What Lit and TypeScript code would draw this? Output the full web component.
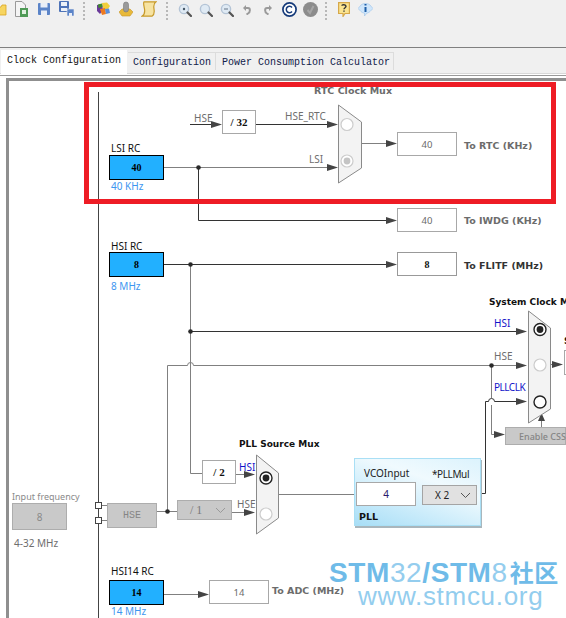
import { LitElement, html, css, svg } from "lit";
import { customElement } from "lit/decorators.js";

const ORIGIN_Y = 77;

type Box = { x: number; y: number; w: number; h: number; t: string; c: string };
type Label = { x: number; y: number; t: string; c: string };

const boxes: Box[] = [
  { x: 222, y: 109, w: 34, h: 24, t: "/ 32", c: "div" },
  { x: 109, y: 154, w: 55, h: 25, t: "40", c: "rc" },
  { x: 397, y: 131, w: 60, h: 24, t: "40", c: "out dim" },
  { x: 397, y: 207, w: 60, h: 24, t: "40", c: "out dim" },
  { x: 109, y: 251, w: 55, h: 25, t: "8", c: "rc" },
  { x: 397, y: 251, w: 60, h: 24, t: "8", c: "out strong" },
  { x: 564, y: 349, w: 40, h: 25, t: "", c: "out" },
  { x: 202, y: 459, w: 34, h: 24, t: "/ 2", c: "div" },
  { x: 12, y: 502, w: 55, h: 27, t: "8", c: "off" },
  { x: 107, y: 502, w: 50, h: 25, t: "HSE", c: "off hse" },
  { x: 505, y: 426, w: 61, h: 18, t: "", c: "off" },
  { x: 109, y: 579, w: 55, h: 25, t: "14", c: "rc" },
  { x: 209, y: 579, w: 60, h: 24, t: "14", c: "out dim" },
];

const labels: Label[] = [
  { x: 314, y: 90, t: "RTC Clock Mux", c: "title grey" },
  { x: 194, y: 117, t: "HSE", c: "wire" },
  { x: 285, y: 115, t: "HSE_RTC", c: "wire" },
  { x: 309, y: 158, t: "LSI", c: "wire" },
  { x: 111, y: 147, t: "LSI RC", c: "name" },
  { x: 111, y: 185, t: "40 KHz", c: "freq" },
  { x: 464, y: 145, t: "To RTC (KHz)", c: "title grey" },
  { x: 464, y: 220, t: "To IWDG (KHz)", c: "title grey" },
  { x: 111, y: 245, t: "HSI RC", c: "name" },
  { x: 111, y: 285, t: "8 MHz", c: "freq" },
  { x: 464, y: 265, t: "To FLITF (MHz)", c: "title dark" },
  { x: 489, y: 301, t: "System Clock Mux", c: "title black" },
  { x: 564, y: 340, t: "SYSCLK", c: "title black" },
  { x: 494, y: 322, t: "HSI", c: "sel" },
  { x: 494, y: 355, t: "HSE", c: "wire" },
  { x: 494, y: 386, t: "PLLCLK", c: "sel narrow" },
  { x: 519, y: 436, t: "Enable CSS", c: "css" },
  { x: 239, y: 443, t: "PLL Source Mux", c: "title black" },
  { x: 239, y: 466, t: "HSI", c: "sel" },
  { x: 237, y: 503, t: "HSE", c: "wire" },
  { x: 12, y: 496, t: "Input frequency", c: "wire small" },
  { x: 14, y: 542, t: "4-32 MHz", c: "wire" },
  { x: 111, y: 570, t: "HSI14 RC", c: "name" },
  { x: 111, y: 610, t: "14 MHz", c: "freq" },
  { x: 272, y: 590, t: "To ADC (MHz)", c: "title grey" },
];

const DARK = "#333";
const GREY = "#808080";

const wires: [string, string][] = [
  ["M190 123.5H214", DARK],
  ["M256 123.5H330", DARK],
  ["M164 166.5H330", GREY],
  ["M198.5 166.5V219.5H390", DARK],
  ["M362 142.5H390", GREY],
  ["M164 263.5H390", DARK],
  ["M190.5 263.5V472.5H202", GREY],
  ["M190.5 330.5H520", DARK],
  ["M167.5 510V364.5H187.5A3 3 0 0 1 193.5 364.5H520", GREY],
  ["M157 510.5H177", GREY],
  ["M232 511.5H248", GREY],
  ["M236 473.5H248", GREY],
  ["M279 493.5H356", GREY],
  ["M415 493.5H422", GREY],
  ["M477 492.5H485.5V400.5H488.5A3 3 0 0 1 494.5 400.5H520", DARK],
  ["M491.5 364.5V397M491.5 404V433.5H497", GREY],
  ["M551 363.5H556", GREY],
  ["M164 593.5H202", GREY],
  ["M102 504.5H107M102 519.5H107", GREY],
];

const arrows: [number, number][] = [
  [222, 123.5], [338, 123.5], [338, 166.5], [397, 142.5], [397, 219.5], [397, 263.5],
  [527, 330.5], [527, 364.5], [527, 400.5], [505, 433.5], [255, 473.5], [255, 511.5],
  [209, 593.5], [563, 363.5],
];

const dots: [number, number][] = [
  [198.5, 166.5], [190.5, 263.5], [190.5, 330.5], [167.5, 510.5], [491.5, 364.5],
];

const muxes: [number, number, number, number, number, number][] = [
  [338, 104, 362, 121, 167, 182],
  [528, 310, 551, 327, 408, 422],
  [256, 454, 279, 472, 517, 533],
];

// x, y, kind: 0 empty dim, 1 selected black, 2 empty black, 3 selected dim
const radios: [number, number, number][] = [
  [347, 123.5, 0], [347, 160, 3],
  [540, 328.5, 1], [540, 364, 0], [540, 401, 2],
  [266, 477, 1], [266, 513, 0],
];

const radio = (x: number, y: number, k: number) => {
  const stroke = k === 1 || k === 2 ? "#222" : "#ccc";
  return svg`<circle cx=${x} cy=${y} r="6" fill="#fff" stroke=${stroke} stroke-width=${k === 1 || k === 2 ? 1.4 : 1.2}></circle>
  ${k === 1 ? svg`<circle cx=${x} cy=${y} r="3.4" fill="#222"></circle>` : ""}
  ${k === 3 ? svg`<circle cx=${x} cy=${y} r="3.4" fill="#c4c4c4"></circle>` : ""}`;
};

const glass = (inner: unknown) => svg`<circle cx="6" cy="6" r="4.6" fill="#dfeaf4" stroke="#b4c4d6" stroke-width="1.4"></circle>
  <path d="M9.5 9.5L13 13" stroke="#555" stroke-width="2.2" stroke-linecap="round"></path>${inner}`;

const icons: { g: number; w: number; h: number; top: number; c: unknown }[] = [
  { g: 0, w: 6, h: 10, top: 5, c: svg`<path d="M-6 2H1L2 0H6V10H-6Z" fill="#f7d560" stroke="#d9a520" stroke-width=".8"></path>` },
  { g: 9, w: 13, h: 16, top: 1, c: svg`<path d="M.5.5H7L10.5 4V15.5H.5Z" fill="#f4f4f4" stroke="#999"></path><rect x="5" y="7" width="8" height="9" fill="#4e9a55"></rect><rect x="7" y="9" width="4" height="4" fill="#dff0df"></rect>` },
  { g: 10, w: 12, h: 12, top: 3, c: svg`<rect width="12" height="12" rx="1" fill="#5b84c8"></rect><rect x="2.5" y="0" width="7" height="4.5" fill="#e9eef7"></rect><rect x="3" y="7.5" width="6" height="4.5" fill="#e9eef7"></rect>` },
  { g: 9, w: 15, h: 15, top: 1, c: svg`<rect width="10" height="11" rx="1" fill="#4f74b8"></rect><rect x="2" y="1" width="6" height="4" fill="#eef2f8"></rect><rect x="2" y="7" width="6" height="3" fill="#eef2f8"></rect><rect x="8" y="8" width="7" height="7" fill="#5b84c8" stroke="#eee" stroke-width=".6"></rect><rect x="10" y="12" width="3" height="3" fill="#e9eef7"></rect>` },
  { g: 9, w: 2, h: 18, top: 2, c: svg`<path d="M1 0V18" stroke="#b8b8b8" stroke-width="2" stroke-dasharray="2 2"></path>` },
  { g: 11, w: 14, h: 14, top: 2, c: svg`<path d="M6 1L11 .5L14 4L12 7H7Z" fill="#f2cf3a"></path><path d="M1 3L6 2L7 8L4 12L1 9Z" fill="#6a3a9a"></path><path d="M2 2.5L6 1.5L6.5 5L2.5 6Z" fill="#3f8a2c"></path><path d="M4 7L9 6L10 12L6 13Z" fill="#ee7a1f"></path><path d="M9 7L13 6.500L14 11L10 12Z" fill="#5b8fdc"></path>` },
  { g: 9, w: 14, h: 16, top: 1, c: svg`<path d="M0 11L3 8H11L14 11L11 15H3Z" fill="#e8b93a" stroke="#c8962a" stroke-width=".6"></path><rect x="4.500" y="1" width="5" height="10" rx="2.500" fill="#9a9a9a" stroke="#777" stroke-width=".6"></rect>` },
  { g: 8, w: 16, h: 16, top: 1, c: svg`<path d="M3 .8H15C13 2 12.500 5 13 8C13.500 11 13 14 11 15.200H1C3 14 4 11 3.500 8C3 5 2 2 3 .8Z" fill="#f6e3a2" stroke="#c79a2a" stroke-width="1.2"></path>` },
  { g: 9, w: 2, h: 18, top: 2, c: svg`<path d="M1 0V18" stroke="#b8b8b8" stroke-width="2" stroke-dasharray="2 2"></path>` },
  { g: 10, w: 14, h: 14, top: 3, c: glass(svg`<circle cx="6" cy="6" r="1.200" fill="#456"></circle>`) },
  { g: 7, w: 14, h: 14, top: 3, c: glass("") },
  { g: 7, w: 14, h: 14, top: 3, c: glass(svg`<path d="M4 6H8" stroke="#678" stroke-width="1"></path>`) },
  { g: 9, w: 8, h: 10, top: 5, c: svg`<path d="M2 3H5C7.500 3 7.500 7 5 8.500L3.500 9.500" fill="none" stroke="#9a9a9a" stroke-width="2"></path><path d="M3 0V6L0 3Z" fill="#9a9a9a"></path>` },
  { g: 13, w: 8, h: 10, top: 5, c: svg`<path d="M6 3H3C.5 3 .5 7 3 8.500L4.500 9.500" fill="none" stroke="#9a9a9a" stroke-width="2"></path><path d="M5 0V6L8 3Z" fill="#9a9a9a"></path>` },
  { g: 10, w: 15, h: 15, top: 2, c: svg`<circle cx="7.500" cy="7.500" r="6.600" fill="#fff" stroke="#153a7a" stroke-width="1.700"></circle><path d="M10 5.500A3.200 3.200 0 1 0 10 9.500" fill="none" stroke="#153a7a" stroke-width="1.500"></path>` },
  { g: 6, w: 15, h: 15, top: 2, c: svg`<circle cx="7.500" cy="7.500" r="7.500" fill="#8c8c8c"></circle><path d="M4.500 8L7 11L10.500 4" fill="none" stroke="#a6a6a6" stroke-width="2"></path>` },
  { g: 7, w: 2, h: 18, top: 2, c: svg`<path d="M1 0V18" stroke="#b8b8b8" stroke-width="2" stroke-dasharray="2 2"></path>` },
  { g: 11, w: 12, h: 15, top: 2, c: svg`<path d="M.6.6H11.400V11.500H7L5 14.500V11.500H.6Z" fill="#fbe48f" stroke="#d6a84a" stroke-width="1.200"></path><path d="M4 3.800C4 2.300 8 2.300 8 4.300C8 5.700 6 5.700 6 7.300M6 8.500V9.800" fill="none" stroke="#333" stroke-width="1.400"></path>` },
  { g: 8, w: 15, h: 14, top: 2, c: svg`<path d="M0 6.500L3 3C5 1 10 1 12 3L15 6.500L12 9.500C11 10.500 9.500 11 9 11L6.500 14V11C5 11 4 10.500 3 9.500Z" fill="#cfe6fb" stroke="#9cc3e8" stroke-width=".6"></path><path d="M7.500 2V3.500M7.500 5V10" stroke="#1f5fa8" stroke-width="2"></path>` },
];

@customElement("app-root")
export class AppRoot extends LitElement {
  static styles = css`
    :host {
      display: block;
      width: 566px;
      height: 618px;
      overflow: hidden;
      background: #f0f0f0;
      font-family: "DejaVu Sans", sans-serif;
    }
    .toolbar {
      height: 47px;
      box-sizing: border-box;
      display: flex;
      align-items: flex-start;
      overflow: hidden;
    }
    .toolbar svg { display: block; flex: none; overflow: hidden; }
    .toolbar svg.folder { overflow: visible; }
    .rule { height: 1px; background: #808080; }
    .tabs {
      height: 26px;
      display: flex;
      align-items: flex-start;
      padding: 2px 0 0 1px;
      box-sizing: border-box;
      border-bottom: 1px solid #d8d8d8;
      font: 10px/12px "Liberation Mono", monospace;
      color: #10204a;
    }
    .tab {
      height: 18px;
      margin-top: 2px;
      box-sizing: border-box;
      border: 1px solid #dcdcdc;
      border-left: none;
      border-bottom: none;
      white-space: nowrap;
    }
    .tab-config { padding: 4px 4px 0 5px; margin-left: 1px; }
    .tab-power { padding: 4px 3px 0 6px; }
    .tab.active {
      height: 24px;
      margin-top: 0;
      padding: 5px 6px 0 6px;
      background: #fff;
      border: none;
      color: #111;
      width: 126px;
    }
    .gap { height: 3px; background: #fff; }
    .strip { height: 1px; background: #9a9a9a; margin-top: -2px; }
    .panel {
      height: 2px;
      background: #fff;
    }
    .canvas {
      position: relative;
      height: 541px;
      background: #fff;
      overflow: hidden;
    }
    .frame-top { position: absolute; left: 6px; right: 0; top: 0; height: 3px; background: #8f8f8f; }
    .frame-left { position: absolute; left: 6px; top: 0; bottom: 0; width: 3px; background: #8f8f8f; }
    svg.wires { position: absolute; left: 0; top: 0; }
    .node {
      position: absolute;
      box-sizing: border-box;
      display: flex;
      align-items: center;
      justify-content: center;
      font-size: 10px;
    }
    .rc { background: #22b0ff; border: 1px solid #000; font: bold 10px "Liberation Serif", serif; color: #000; }
    .out { background: #fff; border: 1px solid #a8a8a8; font: 9.500px "Noto Sans", sans-serif; color: #222; }
    .out.dim { color: #6a6a6a; }
    .out.strong { color: #111; border-color: #999; font-weight: bold; font-family: "Liberation Serif", serif; font-size: 10px; }
    .div { background: #fff; border: 1px solid #a8a8a8; font: bold 11px "Liberation Serif", serif; color: #111; }
    .off { background: #c9c9c9; border: 1px solid #adadad; color: #8a8a8a; font: 10px "Noto Sans", sans-serif; }
    .hse { font: 10px "Liberation Mono", monospace; color: #858585; }
    .label {
      position: absolute;
      white-space: nowrap;
      line-height: 12px;
      font-size: 10px;
      font-family: "Noto Sans", sans-serif;
    }
    .name { color: #111; font-size: 10px; }
    .freq { color: #3d96f0; }
    .wire { color: #6e6e6e; }
    .small { font-size: 9px; color: #8a8a8a; }
    .sel { color: #1212c8; }
    .narrow { letter-spacing: -0.5px; }
    .css { color: #858585; font-size: 9px; font-weight: 500; }
    .title { font-family: "DejaVu Sans", sans-serif; font-size: 9.500px; font-weight: bold; }
    .grey { color: #6c6c6c; }
    .dark { color: #333; }
    .black { color: #111; font-size: 9px; }
    .combo {
      position: absolute;
      box-sizing: border-box;
      display: flex;
      align-items: center;
      border: 1px solid #adadad;
      background: #c9c9c9;
      padding: 0 5px 0 12px;
      justify-content: space-between;
      font: 12px "Liberation Serif", serif;
      color: #7a7a7a;
    }
    .combo.on { background: #e1e1e1; color: #222; font-family: "Noto Sans", sans-serif; font-size: 10px; border-color: #a4a4a4; }
    .combo svg { display: block; }
    .pll {
      position: absolute;
      box-sizing: border-box;
      left: 354px;
      top: 380px;
      width: 127px;
      height: 68px;
      border: 1px solid #a9dff5;
      background: linear-gradient(200deg, #dcf3fd 0%, #f0fafe 35%, #c3e9fa 75%, #a8def6 100%);
      box-shadow: 1px 2px 0 #a9b6bc;
    }
    .pll-field { left: 1px; top: 23px; width: 60px; height: 24px; color: #2a1a6a; border-color: #a8a8a8; font-size: 10px; }
    .pll .label { color: #222; }
    .pll .pll-name { font-weight: bold; color: #111; font-family: "DejaVu Sans", sans-serif; font-size: 9.500px; }
    .pll .pll-mul { letter-spacing: -0.4px; }
    .red {
      position: absolute;
      left: 84px;
      top: 4px;
      width: 472px;
      height: 122px;
      box-sizing: border-box;
      border: 5px solid #ee1c25;
    }
    .watermark {
      position: absolute;
      left: 329px;
      top: 480px;
      font-family: "Liberation Sans", "Noto Sans CJK SC", sans-serif;
      color: #6fbbe8;
      white-space: nowrap;
      line-height: 30px;
    }
    .wm-1 { font-size: 28px; font-weight: bold; letter-spacing: 0.6px; }
    .wm-1 i { font-style: normal; font-weight: normal; color: #94cdee; }
    .wm-1 b { font-size: 24px; font-weight: bold; letter-spacing: 0.5px; margin-left: 2px; }
    .wm-2 {
      position: absolute;
      left: 29px;
      top: 23px;
      font-size: 26px;
      letter-spacing: 0.700px;
      color: #93cdee;
    }
  `;

  private chevron(color: string) {
    return html`<svg width="11" height="7" viewBox="0 0 11 7"><path d="M1 1L5.500 5.500L10 1" fill="none" stroke=${color} stroke-width="1"></path></svg>`;
  }

  render() {
    return html`
      <div class="toolbar">
        ${icons.map(
          (i, idx) => html`<svg
            class=${idx === 0 ? "folder" : ""}
            width=${i.w}
            height=${i.h}
            viewBox="0 0 ${i.w} ${i.h}"
            style="margin-left:${i.g}px;margin-top:${i.top}px"
          >${i.c}</svg>`
        )}
      </div>
      <div class="rule"></div>
      <div class="tabs">
        <div class="tab active">Clock Configuration</div>
        <div class="tab tab-config">Configuration</div>
        <div class="tab tab-power">Power Consumption Calculator</div>
      </div>
      <div class="gap"></div>
      <div class="strip"></div>
      <div class="panel"></div>
      <div class="canvas">
        <div class="frame-top"></div>
        <div class="frame-left"></div>
        <svg class="wires" width="566" height="541" viewBox="0 ${ORIGIN_Y} 566 541">
          <path d="M98.500 91V618" stroke="#444" stroke-width="1" fill="none"></path>
          ${wires.map(([d, c]) => svg`<path d=${d} stroke=${c} stroke-width="1" fill="none"></path>`)}
          ${arrows.map(([x, y]) => svg`<path d="M${x} ${y}L${x - 11} ${y - 3.5}V${y + 3.5}Z" fill="#444"></path>`)}
          <path d="M541.500 412L538 420H545Z" fill="#444"></path>
          <path d="M541.500 420V426" stroke="#808080"></path>
          ${dots.map(([x, y]) => svg`<circle cx=${x} cy=${y} r="2.300" fill="#2a2a2a"></circle>`)}
          ${muxes.map(
            ([x1, y1, x2, y2, y3, y4]) => svg`<path d="M${x1 + 0.5} ${y1}L${x2 - 0.5} ${y2}V${y3}L${x1 + 0.5} ${y4}Z" fill="#f3f3f3" stroke="#8a8a8a"></path>`
          )}
          ${radios.map(([x, y, k]) => radio(x, y, k))}
          <rect x="95.500" y="501.500" width="6" height="6" fill="#fff" stroke="#444"></rect>
          <rect x="95.500" y="516.500" width="6" height="6" fill="#fff" stroke="#444"></rect>
        </svg>
        ${boxes.map(
          (b) => html`<div
            class="node ${b.c}"
            style="left:${b.x}px;top:${b.y - ORIGIN_Y}px;width:${b.w}px;height:${b.h}px"
          >${b.t}</div>`
        )}
        ${labels.map(
          (l) => html`<div class="label ${l.c}" style="left:${l.x}px;top:${l.y - ORIGIN_Y - 6}px">${l.t}</div>`
        )}
        <div class="combo" style="left:177px;top:${499 - ORIGIN_Y}px;width:55px;height:20px">/ 1 ${this.chevron("#9a9a9a")}</div>
        <div class="pll">
          <div class="label" style="left:9px;top:8px">VCOInput</div>
          <div class="label pll-mul" style="left:77px;top:9px">*PLLMul</div>
          <div class="node out pll-field">4</div>
          <div class="combo on" style="left:67px;top:26px;width:55px;height:20px">X 2 ${this.chevron("#555")}</div>
          <div class="label pll-name" style="left:4px;top:52px">PLL</div>
        </div>
        <div class="red"></div>
        <div class="watermark">
          <div class="wm-1">STM<i>32</i>/STM<i>8</i><b>社区</b></div>
          <div class="wm-2">www.stmcu.org</div>
        </div>
      </div>
    `;
  }
}
